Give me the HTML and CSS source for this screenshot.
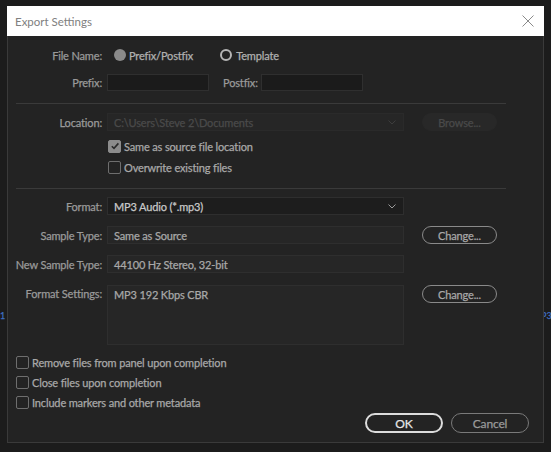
FILE: index.html
```html
<!DOCTYPE html>
<html>
<head>
<meta charset="utf-8">
<link rel="stylesheet" href="styles.css">
</head>
<body>
<div class="bg-marks">
  <span class="mark-left">1</span>
  <span class="mark-right">P3</span>
</div>
<div class="dialog">
  <div class="titlebar">
    <span class="title">Export Settings</span>
    <svg class="close" width="12" height="12" viewBox="0 0 12 12"><path d="M0.5 0.5 L11.5 11.5 M11.5 0.5 L0.5 11.5" stroke="#8a8a8a" stroke-width="1" fill="none"/></svg>
  </div>
  <div class="content">
    <div class="row r-filename">
      <div class="label">File Name:</div>
      <div class="radios">
        <span class="radio on"></span><span class="rtext">Prefix/Postfix</span>
        <span class="radio ring"></span><span class="rtext">Template</span>
      </div>
    </div>
    <div class="row r-prefix">
      <div class="label">Prefix:</div>
      <div class="pair">
        <div class="input small"></div>
        <div class="label2">Postfix:</div>
        <div class="input small"></div>
      </div>
    </div>
    <div class="sep"></div>
    <div class="row r-location">
      <div class="label">Location:</div>
      <div class="field select disabled"><span>C:\Users\Steve 2\Documents</span><svg class="chev" width="8" height="5" viewBox="0 0 8 5"><path d="M0.5 0.5 L4 4 L7.5 0.5" stroke="#3d3d3d" fill="none"/></svg></div>
      <div class="btn disabled-btn">Browse...</div>
    </div>
    <div class="row check-row indent">
      <span class="check checked"><svg width="10" height="10" viewBox="0 0 10 10"><path d="M1.8 5.2 L4 7.4 L8.4 2.4" stroke="#2a2a2a" stroke-width="1.6" fill="none"/></svg></span>
      <span class="ctext">Same as source file location</span>
    </div>
    <div class="row check-row indent r-overwrite">
      <span class="check"></span>
      <span class="ctext">Overwrite existing files</span>
    </div>
    <div class="sep sep2"></div>
    <div class="row r-format">
      <div class="label">Format:</div>
      <div class="field select bright"><span>MP3 Audio (*.mp3)</span><svg class="chev" width="8" height="5" viewBox="0 0 8 5"><path d="M0.5 0.5 L4 4 L7.5 0.5" stroke="#9a9a9a" fill="none"/></svg></div>
    </div>
    <div class="row r-gap">
      <div class="label">Sample Type:</div>
      <div class="field">Same as Source</div>
      <div class="btn">Change...</div>
    </div>
    <div class="row r-gap">
      <div class="label">New Sample Type:</div>
      <div class="field">44100 Hz Stereo, 32-bit</div>
    </div>
    <div class="row r-settings">
      <div class="label">Format Settings:</div>
      <div class="field tall">MP3 192 Kbps CBR</div>
      <div class="btn">Change...</div>
    </div>
    <div class="checks">
      <div class="check-row"><span class="check"></span><span class="ctext">Remove files from panel upon completion</span></div>
      <div class="check-row"><span class="check"></span><span class="ctext">Close files upon completion</span></div>
      <div class="check-row"><span class="check"></span><span class="ctext">Include markers and other metadata</span></div>
    </div>
    <div class="actions">
      <div class="btn ok">OK</div>
      <div class="btn cancel">Cancel</div>
    </div>
  </div>
</div>
</body>
</html>
```
FILE: styles.css
```css
html, body {
  margin: 0;
  padding: 0;
  background: #1c1c1c;
  width: 551px;
  height: 452px;
  overflow: hidden;
  font-family: "Lato", "Open Sans", sans-serif;
  font-size: 11px;
  letter-spacing: -0.15px;
  color: #9a9a9a;
  -webkit-text-stroke: 0.25px currentColor;
}
.bg-marks {
  position: absolute;
  left: 0;
  top: 0;
  width: 551px;
  height: 452px;
}
.mark-left, .mark-right {
  position: absolute;
  top: 310px;
  color: #3f6fc2;
  font-size: 9px;
  letter-spacing: 0;
}
.mark-left { left: 0; }
.mark-right { left: 541px; }
.dialog {
  position: relative;
  margin: 6px 0 0 7px;
  width: 535px;
  height: 436px;
  border: 1px solid #3a3a3a;
  border-top: none;
  background: #232323;
  box-sizing: content-box;
}
.titlebar {
  height: 30px;
  background: #ffffff;
  display: flex;
  align-items: center;
  justify-content: space-between;
  padding: 0 10px 0 8px;
  margin: 0 -1px;
}
.title {
  font-size: 11.5px;
  letter-spacing: 0;
  color: #808080;
  -webkit-text-stroke: 0;
}
.content {
  display: flex;
  flex-direction: column;
}
.row {
  display: flex;
  align-items: center;
  height: 18px;
}
.label {
  width: 94px;
  text-align: right;
  margin-right: 5px;
  flex: none;
  color: #9a9a9a;
  white-space: nowrap;
}
.r-filename { margin-top: 10px; }
.r-prefix { margin-top: 9px; }
.radios {
  display: flex;
  align-items: center;
  color: #b0b0b0;
}
.radio {
  width: 12px;
  height: 12px;
  border-radius: 50%;
  box-sizing: border-box;
  margin-left: 7px;
  margin-right: 3px;
}
.radio.on { background: #8a8a8a; }
.radio.ring { border: 2px solid #b5b5b5; margin-left: 27px; margin-right: 4px; }
.pair {
  display: flex;
  align-items: center;
}
.input {
  height: 17px;
  background: #1b1b1b;
  border: 1px solid #2f2f2f;
  box-sizing: border-box;
}
.input.small { width: 102px; }
.label2 {
  margin: 0 3px 0 14px;
  color: #9a9a9a;
}
.sep {
  height: 1px;
  background: #3a3a3a;
  margin: 12px 37px 0 8px;
}
.r-location { margin-top: 9px; }
.field {
  width: 297px;
  height: 18px;
  box-sizing: border-box;
  border: 1px solid #2e2e2e;
  background: #262626;
  padding: 0 6px;
  display: flex;
  align-items: center;
  color: #a8a8a8;
  flex: none;
}
.field.select {
  justify-content: space-between;
  background: #1d1d1d;
  padding-right: 7px;
}
.field.disabled {
  color: #4a4a4a;
  background: #262626;
  border-color: #2a2a2a;
}
.field.bright { color: #c8c8c8; }
.btn {
  margin-left: 18px;
  width: 75px;
  height: 18px;
  box-sizing: border-box;
  border: 1px solid #8a8a8a;
  border-radius: 9px;
  display: flex;
  align-items: center;
  justify-content: center;
  color: #a8a8a8;
  flex: none;
}
.btn.disabled-btn {
  border-color: #282828;
  background: #282828;
  color: #4a4a4a;
}
.check-row {
  display: flex;
  align-items: center;
  height: 18px;
}
.indent { padding-left: 100px; margin-top: 6px; }
.r-overwrite { margin-top: 3px; }
.check {
  width: 13px;
  height: 13px;
  box-sizing: border-box;
  border: 1px solid #6e6e6e;
  border-radius: 2px;
  margin-right: 3px;
  display: flex;
  align-items: center;
  justify-content: center;
  flex: none;
}
.check.checked {
  background: #8c8c8c;
  border-color: #8c8c8c;
}
.ctext { color: #a8a8a8; }
.r-format { margin-top: 8px; }
.sep2 { margin-top: 12px; }
.r-gap { margin-top: 11px; }
.r-settings {
  margin-top: 12px;
  height: 60px;
  align-items: flex-start;
}
.r-settings .label { padding-top: 2px; }
.field.tall {
  height: 60px;
  align-items: flex-start;
  padding-top: 2px;
}
.checks {
  margin-top: 8px;
  padding-left: 8px;
  display: flex;
  flex-direction: column;
  gap: 2px;
}
.actions {
  margin-top: 2px;
  display: flex;
  justify-content: flex-end;
  padding-right: 14px;
  gap: 8px;
}
.actions .btn {
  margin-left: 0;
  width: 78px;
  height: 20px;
  border-radius: 10px;
  font-size: 12px;
}
.btn.ok {
  border: 2px solid #dcdcdc;
  color: #e6e6e6;
}
.btn.cancel {
  border: 1px solid #7a7a7a;
  color: #9a9a9a;
}
```
